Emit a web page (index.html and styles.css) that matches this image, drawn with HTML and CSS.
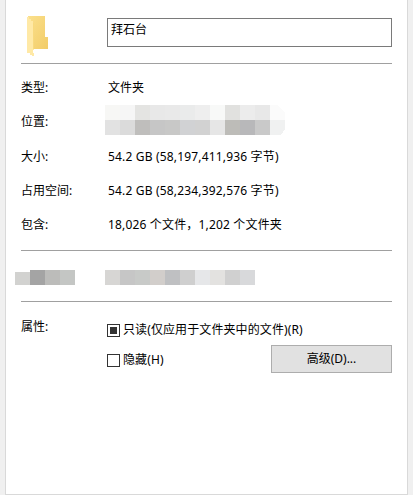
FILE: index.html
```html
<!DOCTYPE html>
<html lang="zh">
<head>
<meta charset="utf-8">
<title>拜石台 属性</title>
<link rel="stylesheet" href="styles.css">
</head>
<body>
<main class="panel">
  <header class="head">
    <svg class="folder" width="27" height="42" viewBox="0 0 27 42" shape-rendering="crispEdges">
      <defs>
        <linearGradient id="back" x1="0" y1="0" x2="1" y2="1">
          <stop offset="0" stop-color="#fbe08c"/><stop offset="1" stop-color="#f2cc68"/>
        </linearGradient>
      </defs>
      <path fill="url(#back)" d="M1 0H18V21H21V33H6V6H1Z"/>
      <path fill="#ffe9a6" d="M0 1H2V3H4V5H6V7H7V34H6V37H7V40H5V39H3V37H0Z"/>
      <path fill="#f8d97e" d="M6 7H7V33H6Z"/>
    </svg>
    <div class="name">拜石台</div>
  </header>
  <hr class="rule rule-head">
  <section class="rows">
    <div class="row"><span class="label">类型:</span><span>文件夹</span></div>
    <div class="row"><span class="label">位置:</span>
      <svg class="mosaic-location" width="180" height="30" viewBox="0 0 180 30" shape-rendering="crispEdges">
        <rect x="0" width="15" height="15" fill="#f7f7f5"/><rect x="15" width="15" height="15" fill="#f6f6f6"/><rect x="30" width="15" height="15" fill="#e4e4e2"/><rect x="45" width="15" height="15" fill="#e8e8e8"/><rect x="60" width="15" height="15" fill="#e9e9e9"/><rect x="75" width="15" height="15" fill="#eaebeb"/><rect x="90" width="15" height="15" fill="#eeeeee"/><rect x="105" width="15" height="15" fill="#f8f9f8"/><rect x="120" width="15" height="15" fill="#e1e1df"/><rect x="135" width="15" height="15" fill="#ececec"/><rect x="150" width="15" height="15" fill="#e8e8e8"/>
        <path d="M165 0H172L180 8V15H165Z" fill="#fbfbfb"/>
        <rect x="0" y="15" width="15" height="15" fill="#e2e2e2"/><rect x="15" y="15" width="15" height="15" fill="#dbdbdb"/><rect x="30" y="15" width="15" height="15" fill="#bfbebc"/><rect x="45" y="15" width="15" height="15" fill="#c6c6c6"/><rect x="60" y="15" width="15" height="15" fill="#c8c8c7"/><rect x="75" y="15" width="15" height="15" fill="#d1d2d4"/><rect x="90" y="15" width="15" height="15" fill="#d2d2d2"/><rect x="105" y="15" width="15" height="15" fill="#e6e6e6"/><rect x="120" y="15" width="15" height="15" fill="#bdbcb8"/><rect x="135" y="15" width="15" height="15" fill="#b8b8ba"/><rect x="150" y="15" width="15" height="15" fill="#c9c9c9"/>
        <path d="M165 15H180V24L176 30H165Z" fill="#f0f1f1"/>
      </svg>
    </div>
    <div class="row"><span class="label">大小:</span><span class="value-wide">54.2 GB (58,197,411,936 字节)</span></div>
    <div class="row"><span class="label">占用空间:</span><span class="value-wide">54.2 GB (58,234,392,576 字节)</span></div>
    <div class="row"><span class="label">包含:</span><span class="value-wide">18,026 个文件，1,202 个文件夹</span></div>
  </section>
  <hr class="rule rule-rows">
  <section class="dates">
    <svg width="75" height="15" viewBox="0 0 75 15" shape-rendering="crispEdges" class="mosaic-label">
      <path d="M0 2H15V15H0Z" fill="#d2d2d0"/><rect x="15" width="15" height="15" fill="#a4a4a4"/><rect x="30" width="15" height="15" fill="#bcbcba"/><rect x="45" width="15" height="15" fill="#c4c6c4"/>
    </svg>
    <svg width="150" height="15" viewBox="0 0 150 15" shape-rendering="crispEdges" class="mosaic-value">
      <rect x="0" width="15" height="15" fill="#d7d6d4"/><rect x="15" width="15" height="15" fill="#c6c6c6"/><rect x="30" width="15" height="15" fill="#c8cac8"/><rect x="45" width="15" height="15" fill="#d2cecb"/><rect x="60" width="15" height="15" fill="#bfc0c2"/><rect x="75" width="15" height="15" fill="#cfcfcf"/><rect x="90" width="15" height="15" fill="#e6e7e9"/><rect x="105" width="15" height="15" fill="#e3e2e0"/><rect x="120" width="15" height="15" fill="#d0d0d0"/><rect x="135" width="15" height="15" fill="#d8d9db"/>
    </svg>
  </section>
  <hr class="rule rule-dates">
  <section class="attrs">
    <span class="label attr-label">属性:</span>
    <div class="attr-fields">
      <label class="check"><span class="box box-mixed"></span>只读(仅应用于文件夹中的文件)(R)</label>
      <div class="attr-line">
        <label class="check"><span class="box"></span>隐藏(H)</label>
        <button class="advanced" type="button">高级(D)...</button>
      </div>
    </div>
  </section>
</main>
</body>
</html>
```
FILE: styles.css
```css
* { box-sizing: border-box; }
html, body { height: 100%; }
body {
  margin: 0;
  padding: 0 5px 0 5px;
  background: #f0f0f0;
  overflow: hidden;
  font: 12px/16px "Noto Sans", "Noto Sans CJK SC", sans-serif;
  color: #000;
}
.panel {
  height: 495px;
  background: #fff;
  border: 1px solid #d9d9d9;
  border-top: 0;
  padding: 0 15px 0 15px;
}
.head {
  display: flex;
  align-items: flex-start;
  height: 63px;
}
.folder { margin: 16px 0 0 6px; flex: none; }
.name {
  margin: 18px 0 0 53px;
  width: 285px;
  height: 29px;
  border: 1px solid #7a7a7a;
  padding: 3px 3px;
  line-height: 16px;
}
.rule {
  display: block;
  margin: 0;
  width: 371px;
  height: 1px;
  border: 0;
  background: #a0a0a0;
}
.rows { padding-top: 7px; }
.row {
  display: grid;
  grid-template-columns: 87px 1fr;
  align-items: center;
  height: 34.25px;
}
.value-wide { letter-spacing: 0.17px; }
.mosaic-location { margin-left: -3px; display: block; align-self: start; }
.rule-rows { margin-top: 7.75px; }
.dates {
  display: flex;
  height: 50px;
  padding-top: 19px;
  margin-left: -6px;
}
.dates svg { display: block; flex: none; }
.mosaic-value { margin-left: 15px; }
.attrs {
  display: grid;
  grid-template-columns: 87px 1fr;
  padding-top: 17px;
}
.attr-label { line-height: 16px; }
.attr-fields { display: flex; flex-direction: column; margin-left: -1px; }
.check {
  display: flex;
  align-items: center;
  gap: 3px;
  height: 18px;
  white-space: nowrap;
  letter-spacing: 0.1px;
}
.attrs .check { margin-top: 2px; }
.box {
  display: flex;
  align-items: center;
  justify-content: center;
  width: 13px;
  height: 13px;
  border: 1px solid #333;
  background: #fff;
  flex: none;
}
.box-mixed::after {
  content: "";
  width: 7px;
  height: 7px;
  background: #333;
}
.attr-line {
  display: flex;
  justify-content: space-between;
  align-items: center;
  margin-top: 6px;
}
.advanced {
  width: 121px;
  height: 28px;
  margin-left: auto;
  background: #e1e1e1;
  border: 1px solid #adadad;
  font: inherit;
  color: #000;
  padding: 0;
}
```
